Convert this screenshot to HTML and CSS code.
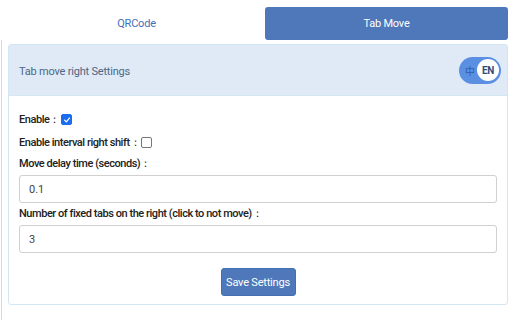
FILE: index.html
```html
<!DOCTYPE html>
<html>
<head>
<meta charset="utf-8">
<link rel="stylesheet" href="styles.css">
</head>
<body>
<div class="edge"></div>
<div class="page">
  <div class="tabs">
    <div class="tab">QRCode</div>
    <div class="tab active">Tab Move</div>
  </div>
  <div class="panel">
    <div class="panel-head">
      <span class="head-title">Tab move right Settings</span>
      <div class="lang">
        <span class="zh">中</span>
        <span class="en">EN</span>
      </div>
    </div>
    <div class="panel-body">
      <div class="row">
        <label class="lbl">Enable：</label>
        <span class="cb checked"><svg viewBox="0 0 10 10" width="8" height="8"><path d="M2 5.2 L4.2 7.4 L8 2.6" fill="none" stroke="#fff" stroke-width="1.6" stroke-linecap="round" stroke-linejoin="round"/></svg></span>
      </div>
      <div class="row">
        <label class="lbl">Enable interval right shift：</label>
        <span class="cb"></span>
      </div>
      <div class="field">
        <label class="lbl">Move delay time (seconds)：</label>
        <div class="input">0.1</div>
      </div>
      <div class="field">
        <label class="lbl">Number of fixed tabs on the right (click to not move)：</label>
        <div class="input">3</div>
      </div>
      <div class="actions">
        <button class="btn">Save Settings</button>
      </div>
    </div>
  </div>
</div>
</body>
</html>
```
FILE: styles.css
```css
html, body {
  margin: 0;
  padding: 0;
  background: #fff;
}
body {
  font-family: Roboto, "Liberation Sans", Arial, sans-serif;
  font-size: 11px;
  color: #222;
  width: 512px;
  height: 320px;
  overflow: hidden;
  position: relative;
}
.edge {
  position: absolute;
  left: 1px;
  top: 40px;
  width: 1px;
  height: 280px;
  background: #d8d8d8;
}
.page {
  padding: 6px 4px 0 8px;
}
.tabs {
  display: flex;
  height: 34px;
}
.tab {
  flex: 1;
  display: flex;
  align-items: center;
  justify-content: center;
  color: #4170b8;
  font-size: 11px;
  letter-spacing: -0.2px;
  border-radius: 3px;
}
.tab.active {
  background: #4e78b9;
  color: #fff;
  margin-top: 1px;
  flex: 0 0 243px;
}
.panel {
  margin-top: 4px;
  border: 1px solid #d3e6f4;
  border-radius: 3px;
  height: 261px;
  box-sizing: border-box;
}
.panel-head {
  background: #dfeaf6;
  height: 50px;
  border-bottom: 1px solid #d3e6f4;
  display: flex;
  align-items: center;
  justify-content: space-between;
  padding: 0 6px 0 10px;
}
.head-title {
  color: #4e6785;
  font-size: 11px;
  letter-spacing: -0.2px;
  padding-top: 2px;
}
.lang {
  width: 42px;
  height: 27px;
  border-radius: 14px;
  background: #5a8fe2;
  display: flex;
  align-items: center;
  justify-content: space-between;
  padding: 0 2px 0 6px;
  box-sizing: border-box;
}
.zh {
  color: #2f5fa8;
  font-size: 10px;
  font-family: "Noto Sans CJK SC", sans-serif;
}
.en {
  width: 22px;
  height: 22px;
  border-radius: 50%;
  background: #fff;
  color: #2b4d7a;
  font-weight: bold;
  font-size: 10px;
  letter-spacing: -0.4px;
  display: flex;
  align-items: center;
  justify-content: center;
}
.panel-body {
  padding: 12px 10px 0 10px;
}
.row {
  display: flex;
  align-items: center;
  height: 23px;
}
.lbl {
  font-weight: 500;
  color: #222;
  letter-spacing: -0.45px;
  font-size: 11px;
  display: block;
}
.cb {
  width: 9px;
  height: 9px;
  border: 1px solid #777;
  border-radius: 2px;
  margin-left: 1px;
  display: flex;
  align-items: center;
  justify-content: center;
  box-sizing: content-box;
  background: #fff;
}
.cb.checked {
  background: #1a6df0;
  border-color: #1a6df0;
}
.field .lbl {
  line-height: 14px;
  margin-top: 3px;
}
.input {
  margin-top: 4px;
  margin-bottom: 4px;
  height: 28px;
  box-sizing: border-box;
  border: 1px solid #d0d0d0;
  border-radius: 3px;
  padding: 0 9px;
  display: flex;
  align-items: center;
  color: #444;
  font-size: 11px;
}
.actions {
  display: flex;
  justify-content: center;
  padding-top: 11px;
}
.btn {
  font-family: Roboto, "Liberation Sans", Arial, sans-serif;
  font-size: 11px;
  letter-spacing: -0.2px;
  color: #fff;
  background: #4e78b9;
  border: 1px solid #4470b0;
  border-radius: 3px;
  width: 75px;
  height: 28px;
  padding: 0;
}
```
